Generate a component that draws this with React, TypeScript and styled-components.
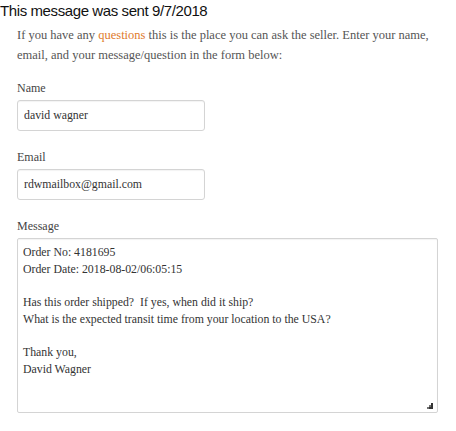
import React from "react";
import styled, { createGlobalStyle } from "styled-components";

const GlobalStyle = createGlobalStyle`
  body {
    margin: 0;
    background: #fff;
  }
`;

const Page = styled.div`
  width: 456px;
  height: 431px;
  overflow: hidden;
`;

const Title = styled.div`
  font-family: "Liberation Sans", Arial, sans-serif;
  font-size: 15px;
  letter-spacing: -0.4px;
  line-height: 22px;
  color: #111;
`;

const Form = styled.form`
  padding-left: 17px;
  width: 425px;
  font-family: "Liberation Serif", "Times New Roman", serif;
  color: #444;
`;

const Intro = styled.p`
  margin: 3px 0 16px;
  font-size: 12.5px;
  line-height: 20px;
  color: #555;
`;

const Accent = styled.a`
  color: #e07a2c;
  text-decoration: none;
`;

const Field = styled.div`
  margin-bottom: 19px;
`;

const Label = styled.label`
  display: block;
  font-size: 12px;
  line-height: 15px;
  margin-bottom: 4px;
`;

const Input = styled.input`
  box-sizing: border-box;
  display: block;
  width: 188px;
  height: 31px;
  padding: 0 6px;
  border: 1px solid #d4d4d4;
  border-radius: 3px;
  box-shadow: inset 0 1px 1px rgba(0, 0, 0, 0.05);
  font-family: inherit;
  font-size: 11.8px;
  color: #333;
  background: #fff;
  outline: none;
`;

const AreaWrap = styled.div`
  position: relative;
  width: 421px;
`;

const TextArea = styled.textarea`
  box-sizing: border-box;
  display: block;
  width: 421px;
  height: 175px;
  padding: 5px;
  border: 1px solid #d4d4d4;
  border-radius: 2px;
  box-shadow: inset 0 1px 1px rgba(0, 0, 0, 0.05);
  font-family: inherit;
  font-size: 11.8px;
  line-height: 16.67px;
  color: #333;
  background: #fff;
  resize: none;
  outline: none;
`;

// resize grip drawn as dots, like the old windows textarea handle
const Grip = styled.svg`
  position: absolute;
  right: 5px;
  bottom: 4px;
  pointer-events: none;
`;

const message = `Order No: 4181695
Order Date: 2018-08-02/06:05:15

Has this order shipped?  If yes, when did it ship?
What is the expected transit time from your location to the USA?

Thank you,
David Wagner`;

export default function App() {
  return (
    <Page>
      <GlobalStyle />
      <Title>This message was sent 9/7/2018</Title>
      <Form onSubmit={(e) => e.preventDefault()}>
        <Intro>
          If you have any <Accent href="#">questions</Accent> this is the place
          you can ask the seller. Enter your name, email, and your
          message/question in the form below:
        </Intro>
        <Field>
          <Label htmlFor="name">Name</Label>
          <Input id="name" defaultValue="david wagner" />
        </Field>
        <Field>
          <Label htmlFor="email">Email</Label>
          <Input id="email" defaultValue="rdwmailbox@gmail.com" />
        </Field>
        <Field>
          <Label htmlFor="message">Message</Label>
          <AreaWrap>
            <TextArea id="message" defaultValue={message} />
            <Grip width="6" height="6" viewBox="0 0 6 6">
              <g fill="#333">
                <rect x="4" y="0" width="2" height="2" />
                <rect x="2" y="2" width="2" height="2" opacity="0.7" />
                <rect x="4" y="2" width="2" height="2" />
                <rect x="0" y="4" width="2" height="2" opacity="0.7" />
                <rect x="2" y="4" width="2" height="2" />
                <rect x="4" y="4" width="2" height="2" />
              </g>
            </Grip>
          </AreaWrap>
        </Field>
      </Form>
    </Page>
  );
}
